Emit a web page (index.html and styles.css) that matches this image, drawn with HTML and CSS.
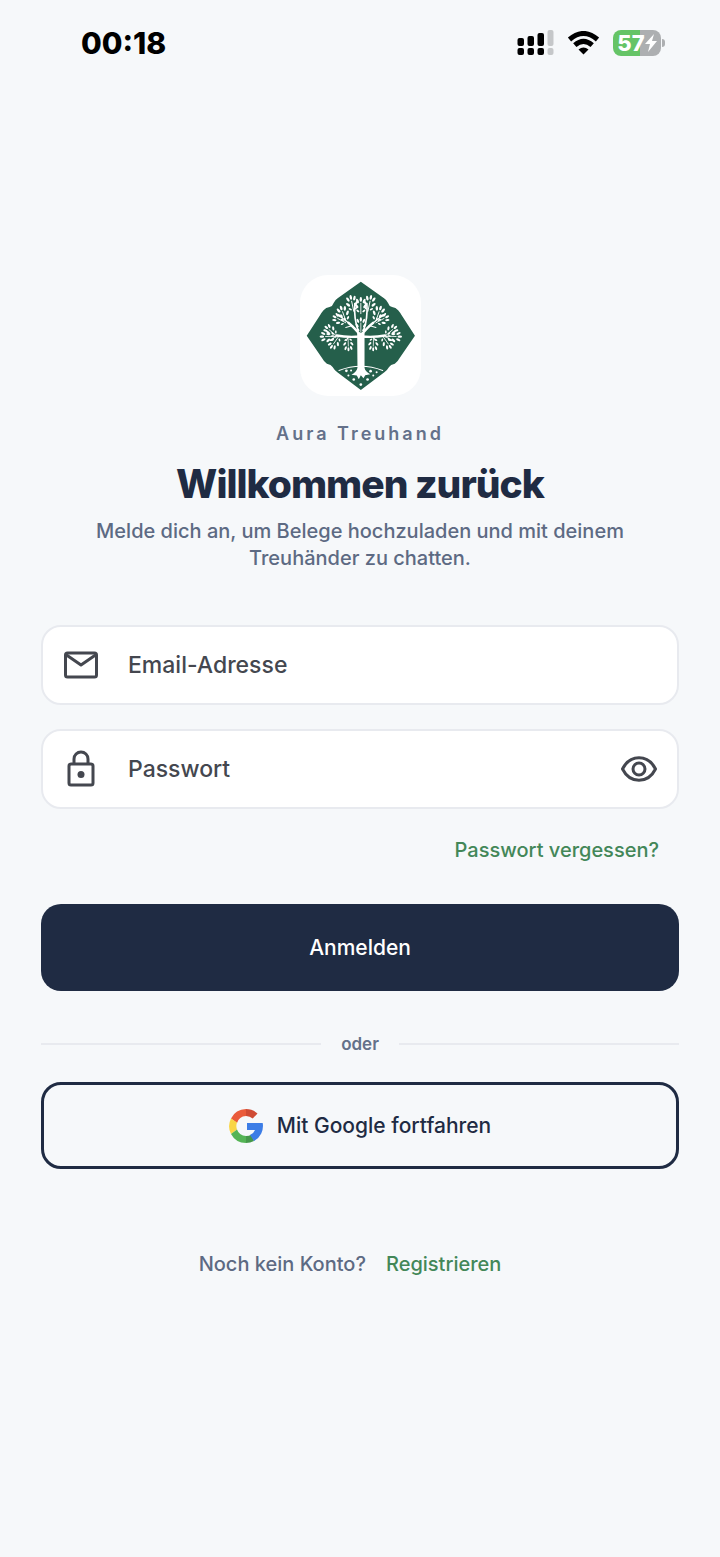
FILE: index.html
```html
<!DOCTYPE html>
<html lang="de">
<head>
  <meta charset="UTF-8" />
  <meta name="viewport" content="width=device-width, initial-scale=1.0" />
  <title>Aura Treuhand</title>
  <link rel="stylesheet" href="styles.css">
</head>

<body>
  <header class="status-bar">
    <span class="time">00:18</span>
    <div class="status-icons">
      <svg class="signal" viewBox="0 0 36 26" aria-hidden="true">
        <rect x="0" y="8" width="6.500" height="8" rx="2" />
        <rect x="10" y="6" width="6.500" height="10" rx="2" />
        <rect x="20" y="3" width="6.500" height="13" rx="2" />
        <rect class="off" x="30" y="0" width="6" height="16" rx="2" />
        <rect x="0" y="18" width="6.500" height="7" rx="2" />
        <rect x="10" y="18" width="6.500" height="7" rx="2" />
        <rect x="20" y="18" width="6.500" height="7" rx="2" />
        <rect class="off" x="30" y="18" width="6" height="7" rx="2" />
      </svg>
      <svg class="wifi" viewBox="0 0 32 24" aria-hidden="true">
        <path d="M2 8.500Q16-3.500 30 8.500M7.300 14.200Q16 6.600 24.700 14.200" />
        <path class="dot" d="M11 18.500Q16 14.500 21 18.500L16 23.500Z" />
      </svg>
      <div class="battery">
        <span>57</span>
        <svg class="bolt" viewBox="0 0 12 18" aria-hidden="true"><path d="M9 0 0 10h5L3 18 12 7H7Z" /></svg>
      </div>
    </div>
  </header>

  <main class="login">
    <svg class="logo" viewBox="30 30 360 360" role="img" aria-label="Aura Treuhand Logo">
      <defs>
        <g id="twig">
          <path d="M0 0V-34" />
          <g class="leaf">
            <ellipse cx="0" cy="-47" rx="4" ry="8" />
            <ellipse cx="-11" cy="-42" rx="4" ry="8" transform="rotate(-24 -11 -42)" />
            <ellipse cx="11" cy="-42" rx="4" ry="8" transform="rotate(24 11 -42)" />
            <ellipse cx="-14" cy="-25" rx="4" ry="8" transform="rotate(-40 -14 -25)" />
            <ellipse cx="14" cy="-25" rx="4" ry="8" transform="rotate(40 14 -25)" />
            <ellipse cx="-10" cy="-9" rx="3" ry="6" transform="rotate(-50 -10 -9)" />
            <ellipse cx="10" cy="-9" rx="3" ry="6" transform="rotate(50 10 -9)" />
          </g>
        </g>
      </defs>
      <path class="shield" d="M211 50L280 99Q289 105 292 113Q295 123 304 125Q315 126 322 135Q328 142 332 149L372 211L328 275Q321 288 312 294Q299 297 295 304Q291 312 281 319L211 372L141 319Q131 312 127 304Q123 297 110 294Q101 288 94 275L50 211L90 149Q94 142 100 135Q107 126 118 125Q127 123 130 113Q133 105 142 99Z" />
      <g class="branches">
        <path class="thick" d="M211 210Q190 185 174 172M211 210Q231 185 248 172M208 213Q170 216 139 210M214 213Q252 216 283 210" />
        <path class="limb" d="M203 195Q190 160 193 115M219 195Q232 160 229 115" />
        <path d="M174 172L152 155M248 172L270 155M174 214L168 225M248 214L254 225M187 180L166 186M235 180L256 186" />
        <use href="#twig" transform="translate(190 138) rotate(-12) scale(.9)" />
        <use href="#twig" transform="translate(232 138) rotate(12) scale(.9)" />
        <use href="#twig" transform="translate(211 145) scale(.9)" />
        <use href="#twig" transform="translate(211 200) scale(.8)" />
        <use href="#twig" transform="translate(167 168) rotate(-20) scale(.9)" />
        <use href="#twig" transform="translate(255 168) rotate(20) scale(.9)" />
        <use href="#twig" transform="translate(166 172) rotate(-62) scale(.8)" />
        <use href="#twig" transform="translate(256 172) rotate(62) scale(.8)" />
        <use href="#twig" transform="translate(137 210) rotate(-50) scale(.8)" />
        <use href="#twig" transform="translate(285 210) rotate(50) scale(.8)" />
        <use href="#twig" transform="translate(135 212) rotate(-92) scale(.85)" />
        <use href="#twig" transform="translate(287 212) rotate(92) scale(.85)" />
        <use href="#twig" transform="translate(145 213) rotate(-145) scale(.8)" />
        <use href="#twig" transform="translate(277 213) rotate(145) scale(.8)" />
        <use href="#twig" transform="translate(173 216) rotate(178) scale(.75)" />
        <use href="#twig" transform="translate(249 216) rotate(-178) scale(.75)" />
        <path d="M146 314Q211 289 276 314" />
      </g>
      <path class="trunk" d="M200 202H222L222 306Q224 318 239 325L224 328L219 337L211 328L205 340L199 329L183 327Q199 318 201 306Z" />
      <g class="leaf">
        <circle cx="168" cy="315" r="4" /><circle cx="182" cy="314" r="3" /><circle cx="240" cy="316" r="4" />
        <circle cx="258" cy="319" r="3" /><circle cx="174" cy="329" r="3" /><circle cx="248" cy="329" r="3" />
        <circle cx="190" cy="341" r="4" /><circle cx="231" cy="341" r="4" /><circle cx="211" cy="356" r="4" />
      </g>
    </svg>

    <p class="brand">Aura Treuhand</p>
    <h1>Willkommen zurück</h1>
    <p class="intro">Melde dich an, um Belege hochzuladen und mit deinem Treuhänder zu chatten.</p>

    <form class="login-form">
      <div class="field">
        <svg class="icon" viewBox="0 0 40 40" aria-hidden="true">
          <rect x="4.500" y="8" width="31" height="24" rx="2" />
          <path d="m5.500 10 14.500 10L34.500 10" />
        </svg>
        <input type="email" aria-label="Email-Adresse" placeholder="Email-Adresse">
      </div>
      <div class="field">
        <svg class="icon" viewBox="0 0 40 40" aria-hidden="true">
          <rect x="8" y="15" width="24" height="21" rx="2" />
          <path d="M13 15v-5a7 7 0 0 1 14 0v5" />
          <circle class="dot" cx="20" cy="25.500" r="3.500" />
        </svg>
        <input type="password" aria-label="Passwort" placeholder="Passwort">
        <button type="button" class="show-password" aria-label="Passwort anzeigen">
          <svg class="icon" viewBox="0 0 40 40" aria-hidden="true">
            <path d="M3.500 20C11 5 29 5 36.500 20C29 35 11 35 3.500 20Z" />
            <circle cx="20" cy="20" r="6" />
          </svg>
        </button>
      </div>
      <a class="forgot" href="#">Passwort vergessen?</a>
      <button type="submit" class="btn btn-primary">Anmelden</button>
      <div class="divider">oder</div>
      <button type="button" class="btn btn-google">
        <svg class="google" viewBox="0 0 34 34" aria-hidden="true">
          <path fill="#ea5b3b" d="M17 0A17 17 0 0 0 2 9.500L8 14A10 10 0 0 1 17 7Z" />
          <path fill="#cf4b35" d="M17 0A17 17 0 0 1 28.500 4.500L23.700 9.500A10 10 0 0 0 17 7Z" />
          <path fill="#f9d546" d="M2 9.500A17 17 0 0 0 2 25L8 20.500A10 10 0 0 1 8 13.500Z" />
          <path fill="#54b455" d="M2 25A17 17 0 0 0 17 34V27A10 10 0 0 1 8 20.500Z" />
          <path fill="#45984a" d="M17 34A17 17 0 0 0 25 32L22.500 25.500A10 10 0 0 1 17 27Z" />
          <path fill="#3c7de6" d="M18 14H33.700A17 17 0 0 1 25 32L21 26Q25 24 26 21H18Z" />
        </svg>
        Mit Google fortfahren
      </button>
    </form>

    <p class="register">Noch kein Konto? <a href="#">Registrieren</a></p>
  </main>
</body>
</html>
```
FILE: styles.css
```css
* {
  box-sizing: border-box;
}
body {
  font-family: Inter, "Liberation Sans", sans-serif;
  background-color: #f6f8fa;
  color: #1f2b43;
  margin: 0;
}
h1, p {
  margin: 0;
}
button, input {
  font-family: inherit;
}
a {
  color: #438758;
  font-weight: 500;
  text-decoration: none;
}

/* status bar */
.status-bar {
  display: flex;
  align-items: center;
  justify-content: space-between;
  height: 86px;
  padding: 0 59px 0 81px;
  color: #000;
}
.time {
  font-size: 30px;
  font-weight: 800;
}
.status-icons {
  display: flex;
  align-items: center;
  gap: 13px;
}
.signal {
  width: 37px;
  height: 26px;
}
.signal .off {
  fill: #c5c7c9;
}
.wifi {
  width: 33px;
  height: 24px;
  fill: none;
  stroke: #000;
  stroke-width: 5;
}
.wifi .dot {
  fill: #000;
  stroke: none;
}
.battery {
  position: relative;
  display: flex;
  align-items: center;
  justify-content: center;
  width: 48px;
  height: 26px;
  border-radius: 8px;
  background: linear-gradient(to right, #65c466 56%, #adafb1 56%);
  color: #fff;
  font-size: 22px;
  font-weight: 800;
}
.battery::after {
  content: "";
  position: absolute;
  right: -4px;
  top: 9px;
  width: 3px;
  height: 8px;
  border-radius: 0 3px 3px 0;
  background: #adafb1;
}
.bolt {
  width: 12px;
  height: 18px;
  fill: #fff;
}

/* login */
.login {
  display: flex;
  flex-direction: column;
  align-items: center;
  padding: 189px 41px 40px;
}
.logo {
  width: 121px;
  height: 121px;
  border-radius: 28px;
  background: #fff;
}
.logo .shield {
  fill: #255f4b;
}
.branches {
  fill: none;
  stroke: #fff;
  stroke-width: 3;
  stroke-linecap: round;
}
.branches .thick {
  stroke-width: 7;
}
.branches .limb {
  stroke-width: 5;
}
.leaf,
.trunk {
  fill: #fff;
  stroke: none;
}
.brand {
  margin-top: 25px;
  color: #64718a;
  font-size: 18px;
  font-weight: 600;
  line-height: 26px;
  letter-spacing: 3px;
}
h1 {
  margin-top: 12px;
  font-size: 39px;
  font-weight: 800;
  line-height: 50px;
  letter-spacing: -1px;
}
.intro {
  max-width: 560px;
  margin-top: 9px;
  color: #5d6a83;
  font-size: 20px;
  font-weight: 500;
  line-height: 27px;
  text-align: center;
}
.login-form {
  display: flex;
  flex-direction: column;
  width: 100%;
  margin-top: 53px;
}
.field {
  display: flex;
  align-items: center;
  height: 80px;
  margin-bottom: 24px;
  padding: 0 18px;
  border: 2px solid #e8eaef;
  border-radius: 20px;
  background: #fff;
}
.field input {
  flex: 1;
  min-width: 0;
  margin-left: 27px;
  padding: 0;
  border: 0;
  outline: 0;
  background: none;
  color: #44474f;
  font-size: 23px;
  font-weight: 500;
}
.field input::placeholder {
  color: #44474f;
  opacity: 1;
}
.icon {
  display: block;
  width: 40px;
  height: 40px;
  fill: none;
  stroke: #44474f;
  stroke-width: 3;
  stroke-linejoin: round;
}
.icon .dot {
  fill: #44474f;
  stroke: none;
}
.show-password {
  padding: 0;
  border: 0;
  background: none;
}
.forgot {
  align-self: flex-end;
  margin: 4px 20px 41px 0;
  font-size: 20px;
  line-height: 26px;
}
.btn {
  display: flex;
  align-items: center;
  justify-content: center;
  gap: 14px;
  height: 87px;
  border: 0;
  border-radius: 20px;
  font-size: 21px;
  font-weight: 500;
}
.btn-primary {
  background: #1f2b43;
  color: #fff;
}
.btn-google {
  border: 3px solid #1f2b43;
  background: none;
  color: #1f2b43;
}
.google {
  width: 34px;
  height: 34px;
}
.divider {
  display: flex;
  align-items: center;
  gap: 20px;
  margin: 41px 0 26px;
  color: #64718a;
  font-size: 17px;
  font-weight: 600;
  line-height: 24px;
}
.divider::before,
.divider::after {
  content: "";
  flex: 1;
  height: 2px;
  background: #e8eaef;
}
.register {
  display: flex;
  gap: 20px;
  margin-top: 82px;
  padding-right: 20px;
  color: #5d6a83;
  font-size: 20px;
  font-weight: 500;
  line-height: 26px;
}
```
